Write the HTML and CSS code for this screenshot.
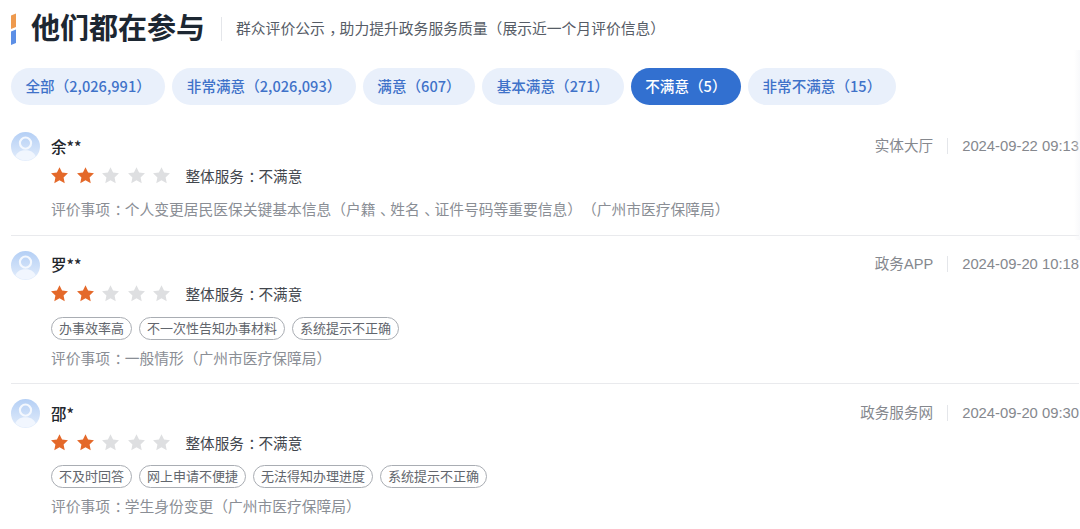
FILE: index.html
```html
<!DOCTYPE html>
<html lang="zh-CN">
<head>
<meta charset="utf-8">
<title>他们都在参与</title>
<link rel="stylesheet" href="styles.css">
</head>
<body>
<svg width="0" height="0" class="defs">
  <defs>
    <symbol id="star" viewBox="0 0 20 20"><path d="M10 1.200l2.700 5.700 6.200.8-4.600 4.300 1.200 6.200L10 15.100l-5.500 3.100 1.200-6.200L1.100 7.700l6.200-.8z"/></symbol>
    <symbol id="avatar" viewBox="0 0 30 30">
      <circle cx="15" cy="15" r="15" fill="url(#avbg)"/>
      <circle cx="15" cy="11.500" r="5.800" fill="none" stroke="#f4f8fe" stroke-width="2.200"/>
      <path d="M4.500 25c2-4.500 6-6.200 10.500-6.200S23.500 20.500 25.500 25A15 15 0 0 1 4.500 25z" fill="#f1f6fe"/>
    </symbol>
    <linearGradient id="avbg" x1="0" y1="0" x2="0" y2="1"><stop offset="0" stop-color="#b4cff5"/><stop offset="1" stop-color="#e3edfb"/></linearGradient>
  </defs>
</svg>
<main class="page">
  <header class="head">
    <svg class="mark" viewBox="0 0 5 32"><path d="M0 2.500L5 .5V14L0 16z" fill="#ee9a4e"/><path d="M0 18.500L5 16.500V30L0 32z" fill="#5c8fe6"/></svg>
    <h1 class="title">他们都在参与</h1>
    <p class="subtitle">群众评价公示<span class="punct">，</span>助力提升政务服务质量（展示近一个月评价信息）</p>
  </header>
  <nav class="tabs">
    <a class="tab">全部（2,026,991）</a>
    <a class="tab">非常满意（2,026,093）</a>
    <a class="tab">满意（607）</a>
    <a class="tab">基本满意（271）</a>
    <a class="tab active">不满意（5）</a>
    <a class="tab">非常不满意（15）</a>
  </nav>
  <section class="list">
    <article class="row first">
      <svg class="avatar"><use href="#avatar"/></svg>
      <div class="body">
        <div class="top"><span class="name">余**</span><span class="meta"><span class="source">实体大厅</span><span class="time">2024-09-22 09:13</span></span></div>
        <div class="rate"><span class="stars"><svg class="star on"><use href="#star"/></svg><svg class="star on"><use href="#star"/></svg><svg class="star"><use href="#star"/></svg><svg class="star"><use href="#star"/></svg><svg class="star"><use href="#star"/></svg></span><span class="overall">整体服务<span class="punct">：</span>不满意</span></div>
        <p class="item plain">评价事项<span class="punct">：</span>个人变更居民医保关键基本信息（户籍<span class="punct">、</span>姓名<span class="punct">、</span>证件号码等重要信息）（广州市医疗保障局）</p>
      </div>
    </article>
    <article class="row">
      <svg class="avatar"><use href="#avatar"/></svg>
      <div class="body">
        <div class="top"><span class="name">罗**</span><span class="meta"><span class="source">政务APP</span><span class="time">2024-09-20 10:18</span></span></div>
        <div class="rate"><span class="stars"><svg class="star on"><use href="#star"/></svg><svg class="star on"><use href="#star"/></svg><svg class="star"><use href="#star"/></svg><svg class="star"><use href="#star"/></svg><svg class="star"><use href="#star"/></svg></span><span class="overall">整体服务<span class="punct">：</span>不满意</span></div>
        <div class="tags"><span class="tag">办事效率高</span><span class="tag">不一次性告知办事材料</span><span class="tag">系统提示不正确</span></div>
        <p class="item">评价事项<span class="punct">：</span>一般情形（广州市医疗保障局）</p>
      </div>
    </article>
    <article class="row">
      <svg class="avatar"><use href="#avatar"/></svg>
      <div class="body">
        <div class="top"><span class="name">邵*</span><span class="meta"><span class="source">政务服务网</span><span class="time">2024-09-20 09:30</span></span></div>
        <div class="rate"><span class="stars"><svg class="star on"><use href="#star"/></svg><svg class="star on"><use href="#star"/></svg><svg class="star"><use href="#star"/></svg><svg class="star"><use href="#star"/></svg><svg class="star"><use href="#star"/></svg></span><span class="overall">整体服务<span class="punct">：</span>不满意</span></div>
        <div class="tags"><span class="tag">不及时回答</span><span class="tag">网上申请不便捷</span><span class="tag">无法得知办理进度</span><span class="tag">系统提示不正确</span></div>
        <p class="item">评价事项<span class="punct">：</span>学生身份变更（广州市医疗保障局）</p>
      </div>
    </article>
  </section>
</main>
</body>
</html>
```
FILE: styles.css
```css
* { box-sizing: border-box; }
html, body { margin: 0; height: 100%; overflow: hidden; background: #fff; }
body { font-family: "Liberation Sans", "Noto Sans CJK SC", sans-serif; color: #2b2f36; text-spacing-trim: space-all; }
.defs { position: absolute; }
.page { position: relative; width: 1080px; height: 529px; overflow: hidden; padding: 12px 1px 0 11px; }
.page::after { content: ""; position: absolute; top: 50px; right: 0; width: 6px; height: 190px; background: linear-gradient(90deg, rgba(244,245,248,0), rgba(244,245,248,.6)); pointer-events: none; }
.punct { margin-left: .3em; letter-spacing: -.3em; }

.head { display: flex; align-items: center; height: 34px; }
.mark { width: 5px; height: 32px; flex: none; }
.title { margin: 0 0 0 15px; font-size: 29px; line-height: 34px; font-weight: 700; color: #1d2732; white-space: nowrap; }
.subtitle { margin: 0 0 0 16px; padding-left: 14px; border-left: 1px solid #e4e6ea; font-size: 14.800px; line-height: 24px; color: #565c66; white-space: nowrap; }

.tabs { display: flex; gap: 7px; margin-top: 22px; }
.tab { display: block; height: 37px; line-height: 36px; padding: 0 14.500px; border-radius: 19px; background: #e9f0fb; color: #3f72c9; font-family: "Noto Sans CJK SC", sans-serif; font-size: 14.600px; font-weight: 500; white-space: nowrap; }
.tab.active { background: #3270d0; color: #fff; }

.list { margin-top: 26px; }
.row { display: flex; gap: 11px; padding: 0 0 14.500px; }
.row + .row { border-top: 1px solid #e9eaed; padding-top: 14px; }
.row.first { padding-bottom: 14.500px; }
.avatar { width: 29px; height: 29px; flex: none; margin-top: 1px; }
.body { flex: 1; min-width: 0; }
.top { display: flex; justify-content: space-between; align-items: center; height: 29px; }
.name { font-family: "Noto Sans CJK SC", sans-serif; font-size: 15.500px; font-weight: 500; color: #22262c; }
.meta { display: flex; align-items: center; color: #85888e; font-size: 14.600px; }
.source { padding-right: 14px; border-right: 1px solid #e4e6ea; line-height: 16px; }
.time { padding-left: 14px; font-size: 14.800px; white-space: nowrap; }
.rate { display: flex; align-items: center; height: 30px; }
.stars { display: flex; gap: 6.500px; margin-left: -1px; }
.star { width: 19px; height: 19px; fill: #dedfe1; }
.star.on { fill: #e4692a; }
.overall { margin-left: 14.500px; font-size: 14.600px; color: #42464d; }
.item { margin: 0; font-size: 14.750px; line-height: 20px; color: #8a8e95; white-space: nowrap; }
.item.plain { margin-top: 10px; }
.tags { display: flex; gap: 7px; margin-top: 8px; margin-bottom: 9px; }
.tag { height: 23px; line-height: 21px; padding: 0 7px; border: 1px solid #a9adb3; border-radius: 12px; font-size: 13px; color: #62666d; white-space: nowrap; }
```
